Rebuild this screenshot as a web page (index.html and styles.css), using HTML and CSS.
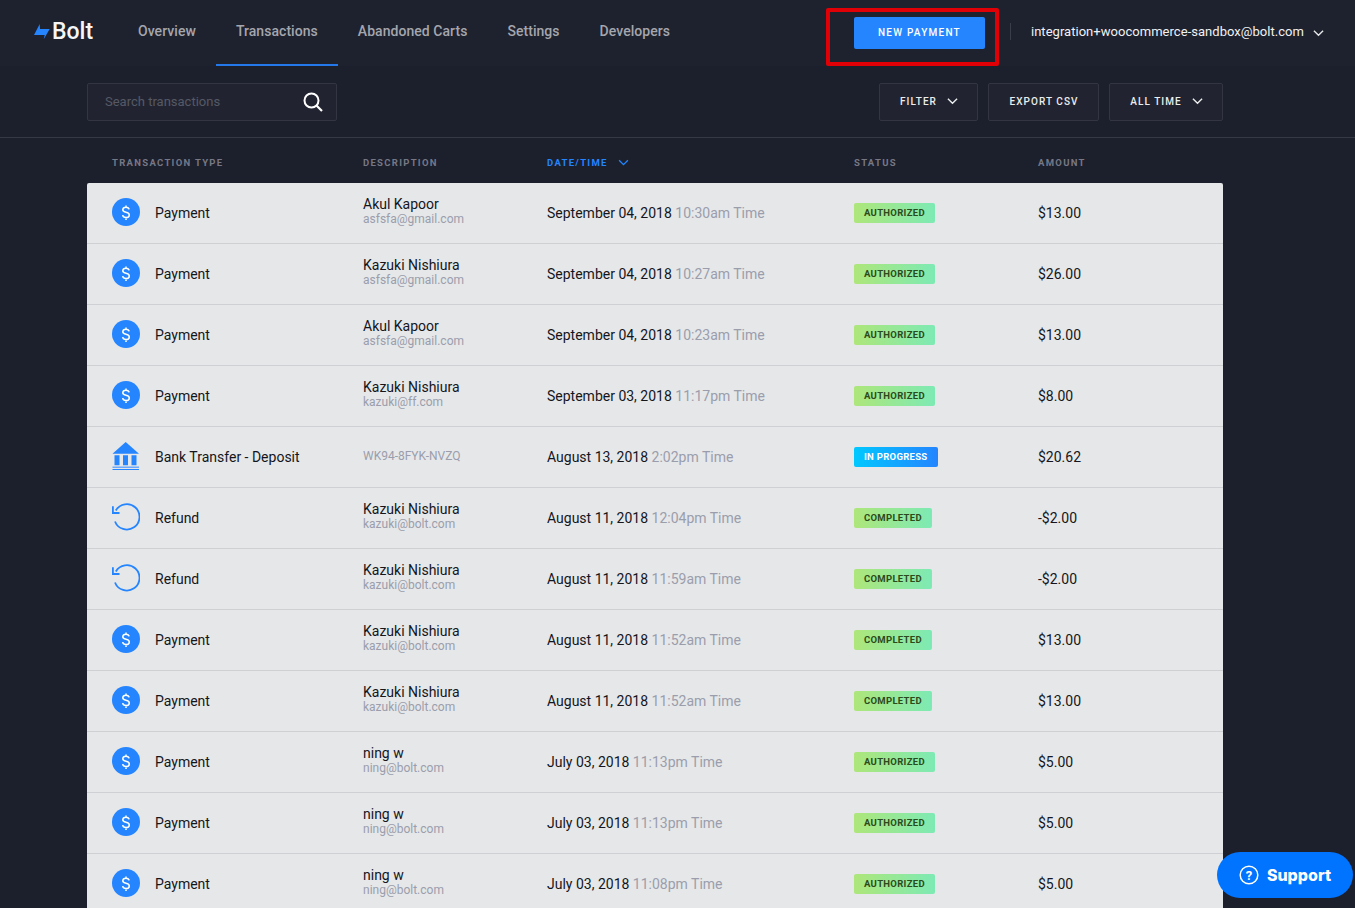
FILE: index.html
```html
<!DOCTYPE html>
<html lang="en">
<head>
<meta charset="utf-8">
<title>Bolt Transactions</title>
<link rel="stylesheet" href="styles.css">
</head>
<body>
<svg class="defs" width="0" height="0" aria-hidden="true">
  <symbol id="i-pay" viewBox="0 0 28 28"><circle cx="14" cy="14" r="14" fill="#2485ff"/><path d="M17.100 11.300c-.3-1.300-1.400-2.100-3.100-2.100-1.800 0-3.200 1-3.200 2.600 0 1.500 1.100 2.100 3.200 2.500 2.200.4 3.300 1.100 3.300 2.600 0 1.700-1.400 2.600-3.300 2.600-1.900 0-3.100-.9-3.400-2.300M14 7.500v1.700M14 20.400v1.700" fill="none" stroke="#fff" stroke-width="1.500"/></symbol>
  <symbol id="i-bank" viewBox="0 0 28 28"><path d="M13.700 0 27 11.700H.5z" fill="#2485ff"/><path d="M2.500 13.300h5v10h-5zM11 13.300h5v10h-5zM19.500 13.300h5v10h-5zM.5 27H27v1H.5z" fill="#2485ff"/><path d="M.5 24.500H27V26H.5z" fill="#6aa9fb"/></symbol>
  <symbol id="i-ref" viewBox="0 0 28 28"><path d="M3.800 7.500A12.700 12.700 0 1 1 3 18.500" fill="none" stroke="#2485ff" stroke-width="1.800"/><path d="M.9 3.300V10H7.500" fill="none" stroke="#2485ff" stroke-width="1.800"/></symbol>
  <symbol id="i-chev" viewBox="0 0 12 8"><path d="M1 1.500 6 6.500l5-5" fill="none" stroke="currentColor" stroke-width="1.500"/></symbol>
</svg>

<header class="topbar">
  <div class="logo">
    <svg class="logo-mark" viewBox="0 0 17 16"><path d="M6.700 0 7 5H16.700L10.700 15.300 11.700 11H1z" fill="#2485ff"/></svg>
    <span>Bolt</span>
  </div>
  <nav class="nav">
    <a class="nav-item">Overview</a>
    <a class="nav-item active">Transactions</a>
    <a class="nav-item">Abandoned Carts</a>
    <a class="nav-item">Settings</a>
    <a class="nav-item">Developers</a>
  </nav>
  <div class="top-right">
    <button class="new-payment">NEW PAYMENT</button>
    <span class="divider"></span>
    <span class="account">integration+woocommerce-sandbox@bolt.com</span>
    <svg class="account-chev"><use href="#i-chev"/></svg>
  </div>
</header>
<div class="annotation"></div>

<section class="toolbar">
  <div class="search">
    <span>Search transactions</span>
    <svg class="search-icon" viewBox="0 0 20 20"><circle cx="8.500" cy="8.500" r="7" fill="none" stroke="#fff" stroke-width="2"/><path d="m13.500 13.500 5.500 5.500" stroke="#fff" stroke-width="2.200"/></svg>
  </div>
  <div class="actions">
    <button class="tool-btn filter">FILTER<svg><use href="#i-chev"/></svg></button>
    <button class="tool-btn export">EXPORT CSV</button>
    <button class="tool-btn time">ALL TIME<svg><use href="#i-chev"/></svg></button>
  </div>
</section>

<main class="content">
  <div class="grid thead">
    <span>TRANSACTION TYPE</span>
    <span>DESCRIPTION</span>
    <span class="sorted">DATE/TIME<svg><use href="#i-chev"/></svg></span>
    <span>STATUS</span>
    <span>AMOUNT</span>
  </div>
  <div class="tbody">
    <div class="grid row"><div class="type"><svg class="ti"><use href="#i-pay"/></svg>Payment</div><div class="desc"><b>Akul Kapoor</b><small>asfsfa@gmail.com</small></div><div class="date">September 04, 2018 <i>10:30am Time</i></div><div><span class="badge ok">AUTHORIZED</span></div><div class="amt">$13.00</div></div>
    <div class="grid row"><div class="type"><svg class="ti"><use href="#i-pay"/></svg>Payment</div><div class="desc"><b>Kazuki Nishiura</b><small>asfsfa@gmail.com</small></div><div class="date">September 04, 2018 <i>10:27am Time</i></div><div><span class="badge ok">AUTHORIZED</span></div><div class="amt">$26.00</div></div>
    <div class="grid row"><div class="type"><svg class="ti"><use href="#i-pay"/></svg>Payment</div><div class="desc"><b>Akul Kapoor</b><small>asfsfa@gmail.com</small></div><div class="date">September 04, 2018 <i>10:23am Time</i></div><div><span class="badge ok">AUTHORIZED</span></div><div class="amt">$13.00</div></div>
    <div class="grid row"><div class="type"><svg class="ti"><use href="#i-pay"/></svg>Payment</div><div class="desc"><b>Kazuki Nishiura</b><small>kazuki@ff.com</small></div><div class="date">September 03, 2018 <i>11:17pm Time</i></div><div><span class="badge ok">AUTHORIZED</span></div><div class="amt">$8.00</div></div>
    <div class="grid row"><div class="type"><svg class="ti"><use href="#i-bank"/></svg>Bank Transfer - Deposit</div><div class="desc ref"><small>WK94-8FYK-NVZQ</small></div><div class="date">August 13, 2018 <i>2:02pm Time</i></div><div><span class="badge prog">IN PROGRESS</span></div><div class="amt">$20.62</div></div>
    <div class="grid row"><div class="type"><svg class="ti"><use href="#i-ref"/></svg>Refund</div><div class="desc"><b>Kazuki Nishiura</b><small>kazuki@bolt.com</small></div><div class="date">August 11, 2018 <i>12:04pm Time</i></div><div><span class="badge ok">COMPLETED</span></div><div class="amt">-$2.00</div></div>
    <div class="grid row"><div class="type"><svg class="ti"><use href="#i-ref"/></svg>Refund</div><div class="desc"><b>Kazuki Nishiura</b><small>kazuki@bolt.com</small></div><div class="date">August 11, 2018 <i>11:59am Time</i></div><div><span class="badge ok">COMPLETED</span></div><div class="amt">-$2.00</div></div>
    <div class="grid row"><div class="type"><svg class="ti"><use href="#i-pay"/></svg>Payment</div><div class="desc"><b>Kazuki Nishiura</b><small>kazuki@bolt.com</small></div><div class="date">August 11, 2018 <i>11:52am Time</i></div><div><span class="badge ok">COMPLETED</span></div><div class="amt">$13.00</div></div>
    <div class="grid row"><div class="type"><svg class="ti"><use href="#i-pay"/></svg>Payment</div><div class="desc"><b>Kazuki Nishiura</b><small>kazuki@bolt.com</small></div><div class="date">August 11, 2018 <i>11:52am Time</i></div><div><span class="badge ok">COMPLETED</span></div><div class="amt">$13.00</div></div>
    <div class="grid row"><div class="type"><svg class="ti"><use href="#i-pay"/></svg>Payment</div><div class="desc"><b>ning w</b><small>ning@bolt.com</small></div><div class="date">July 03, 2018 <i>11:13pm Time</i></div><div><span class="badge ok">AUTHORIZED</span></div><div class="amt">$5.00</div></div>
    <div class="grid row"><div class="type"><svg class="ti"><use href="#i-pay"/></svg>Payment</div><div class="desc"><b>ning w</b><small>ning@bolt.com</small></div><div class="date">July 03, 2018 <i>11:13pm Time</i></div><div><span class="badge ok">AUTHORIZED</span></div><div class="amt">$5.00</div></div>
    <div class="grid row"><div class="type"><svg class="ti"><use href="#i-pay"/></svg>Payment</div><div class="desc"><b>ning w</b><small>ning@bolt.com</small></div><div class="date">July 03, 2018 <i>11:08pm Time</i></div><div><span class="badge ok">AUTHORIZED</span></div><div class="amt">$5.00</div></div>
  </div>
</main>

<button class="support">
  <svg viewBox="0 0 20 20"><circle cx="10" cy="10" r="8.800" fill="none" stroke="#fff" stroke-width="1.500"/><text x="10" y="14.500" text-anchor="middle" class="q">?</text></svg>
  Support
</button>
</body>
</html>
```

FILE: styles.css
```css
* { box-sizing: border-box; }
html, body { height: 100%; }
body {
  margin: 0;
  height: 908px;
  overflow: hidden;
  background: #1c1f2c;
  font-family: Roboto, "Liberation Sans", sans-serif;
  color: #14161c;
}
.defs { position: absolute; }
button { font-family: inherit; cursor: pointer; }

.topbar {
  height: 66px;
  background: #1e212e;
  display: flex;
  align-items: stretch;
  padding-left: 33px;
}
.logo {
  display: flex;
  align-items: center;
  width: 85px;
  margin-top: -3px;
  color: #f6f6f7;
  font-size: 23px;
  font-weight: 500;
}
.logo-mark { width: 17px; height: 16px; margin-right: 2px; }
.nav { display: flex; }
.nav-item {
  display: flex;
  align-items: center;
  padding: 0 20px 2px;
  font-size: 14px;
  font-weight: 500;
  letter-spacing: .05px;
  color: #a4a6ad;
  border-bottom: 2px solid transparent;
}
.nav-item.active { border-bottom-color: #2478ea; }
.top-right {
  margin-left: auto;
  display: flex;
  align-items: center;
  padding-right: 31px;
}
.new-payment {
  width: 131px;
  height: 32px;
  border: 0;
  border-radius: 2px;
  background: #2485ff;
  color: #fff;
  font-size: 10px;
  font-weight: 500;
  letter-spacing: 1.250px;
  padding: 0 0 2px;
}
.divider { width: 1px; height: 17px; background: #3a3d4a; margin: -3px 20px 0 25px; }
.account { color: #f1f1f3; font-size: 13px; letter-spacing: .035px; margin-top: -3px; }
.account-chev { width: 11px; height: 8px; margin: 0 0 0 9px; color: #e6e7ea; }
.annotation {
  position: absolute;
  left: 826px;
  top: 8px;
  width: 173px;
  height: 58px;
  border: 4px solid #e00006;
  border-radius: 2px;
}

.toolbar {
  height: 72px;
  border-bottom: 1px solid #363945;
  padding: 17px 132px 16px 87px;
  display: flex;
  justify-content: space-between;
}
.search {
  width: 250px;
  height: 38px;
  background: #212430;
  border: 1px solid #333642;
  border-radius: 2px;
  display: flex;
  align-items: center;
  justify-content: space-between;
  padding: 0 13px 0 17px;
  color: #565965;
  font-size: 13px;
}
.search span { margin-top: -2px; }
.search-icon { width: 20px; height: 20px; }
.actions { display: flex; gap: 10px; }
.tool-btn {
  height: 38px;
  background: #212430;
  border: 1px solid #333642;
  border-radius: 2px;
  color: #eceded;
  font-size: 10px;
  font-weight: 500;
  letter-spacing: 1.050px;
  display: flex;
  align-items: center;
  justify-content: center;
  padding: 0 0 2px 1px;
}
.tool-btn svg { width: 11px; height: 8px; margin-left: 10px; }
.filter { width: 99px; }
.export { width: 111px; }
.time { width: 114px; }

.content { margin: 0 132px 0 87px; }
.grid {
  display: grid;
  grid-template-columns: 251px 184px 307px 184px 1fr;
  padding-left: 25px;
  align-items: center;
}
.thead {
  height: 45px;
  padding-top: 4px;
  font-size: 9.500px;
  font-weight: 700;
  letter-spacing: 1.300px;
  color: #767885;
}
.sorted { color: #2485ff; display: flex; align-items: center; }
.sorted svg { width: 11px; height: 7px; margin-left: 10px; }
.tbody { background: #e6e7e9; border-radius: 2px 2px 0 0; }
.row {
  height: 61px;
  border-bottom: 1px solid #cfd0d3;
  font-size: 14px;
}
.type { display: flex; align-items: center; }
.ti { width: 28px; height: 28px; margin-right: 15px; flex: none; margin-top: -2px; overflow: visible; }
.desc { display: flex; flex-direction: column; margin-top: -4px; }
.desc.ref { margin-top: -2px; }
.desc b { font-weight: 400; font-size: 14px; line-height: 16px; }
.desc small { font-size: 12px; line-height: 14px; color: #9a9eac; }
.date i { font-style: normal; color: #9a9eac; }
.badge {
  display: inline-block;
  height: 20px;
  line-height: 19px;
  padding: 0 10px;
  border-radius: 2px;
  font-size: 9.500px;
  font-weight: 700;
  letter-spacing: .3px;
  vertical-align: middle;
}
.ok { background: linear-gradient(90deg, #aee67a, #7deab4); color: #2c4a1c; }
.prog { background: linear-gradient(90deg, #00c8ff, #2485ff); color: #fff; }

.support {
  position: fixed;
  left: 1217px;
  top: 852px;
  width: 136px;
  height: 46px;
  border: 0;
  border-radius: 23px;
  background: #0074ff;
  color: #fff;
  font-family: Inter, Roboto, sans-serif;
  font-size: 16px;
  font-weight: 800;
  display: flex;
  align-items: center;
  justify-content: center;
  gap: 8px;
  padding: 0;
}
.support svg { width: 20px; height: 20px; }
.q { font-size: 13px; font-weight: 700; fill: #fff; font-family: Roboto, sans-serif; }
```
